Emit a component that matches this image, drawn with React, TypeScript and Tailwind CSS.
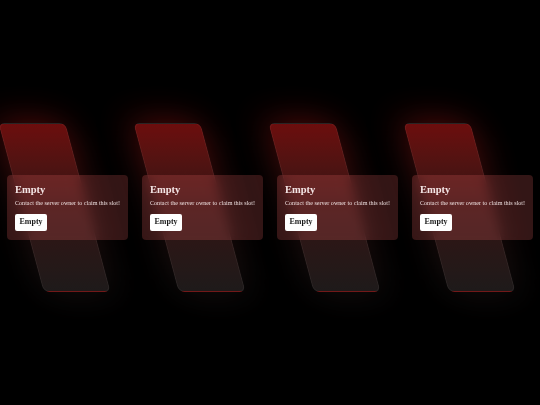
import React from 'react';

const slots = [1, 2, 3, 4];

const SlotCard = () => (
  <div className="relative w-[121px] h-[65px]">
    {/* blurred copy gives the red haze */}
    <div className="absolute left-[14px] top-[-52px] w-[67px] h-[169px] skew-x-[15deg] rounded-md bg-gradient-to-b from-[#800c0c] via-[#360f0f] to-[#1a1616] blur-[18px] opacity-75" />
    {/* skewed panel behind the card */}
    <div className="absolute left-[14px] top-[-52px] w-[67px] h-[169px] skew-x-[15deg] rounded-md border border-white/5 bg-gradient-to-b from-[#6c0d0d] via-[#331313] to-[#1e1a1a]" />
    <div className="relative h-full rounded-[4px] bg-[rgba(255,110,110,0.2)] backdrop-blur-[6px] px-2 pt-[8px]">
      <h2 className="text-[10.5px] font-bold leading-[13px] text-[#f5e6e6]">Empty</h2>
      <p className="mt-[3px] text-[6.1px] leading-[8px] text-[#ecdede] whitespace-nowrap">
        Contact the server owner to claim this slot!
      </p>
      <button className="mt-[6px] h-[17px] w-[32px] rounded-[2px] bg-white text-[8px] font-bold text-[#1a1a1a]">
        Empty
      </button>
    </div>
  </div>
);

export default function App() {
  return (
    <div
      className="h-[405px] w-[540px] overflow-hidden bg-black flex items-center pl-[7px] pt-[10px] gap-[14px]"
      style={{ fontFamily: '"Liberation Serif", "DejaVu Serif", serif' }}
    >
      {slots.map((s) => (
        <SlotCard key={s} />
      ))}
    </div>
  );
}
